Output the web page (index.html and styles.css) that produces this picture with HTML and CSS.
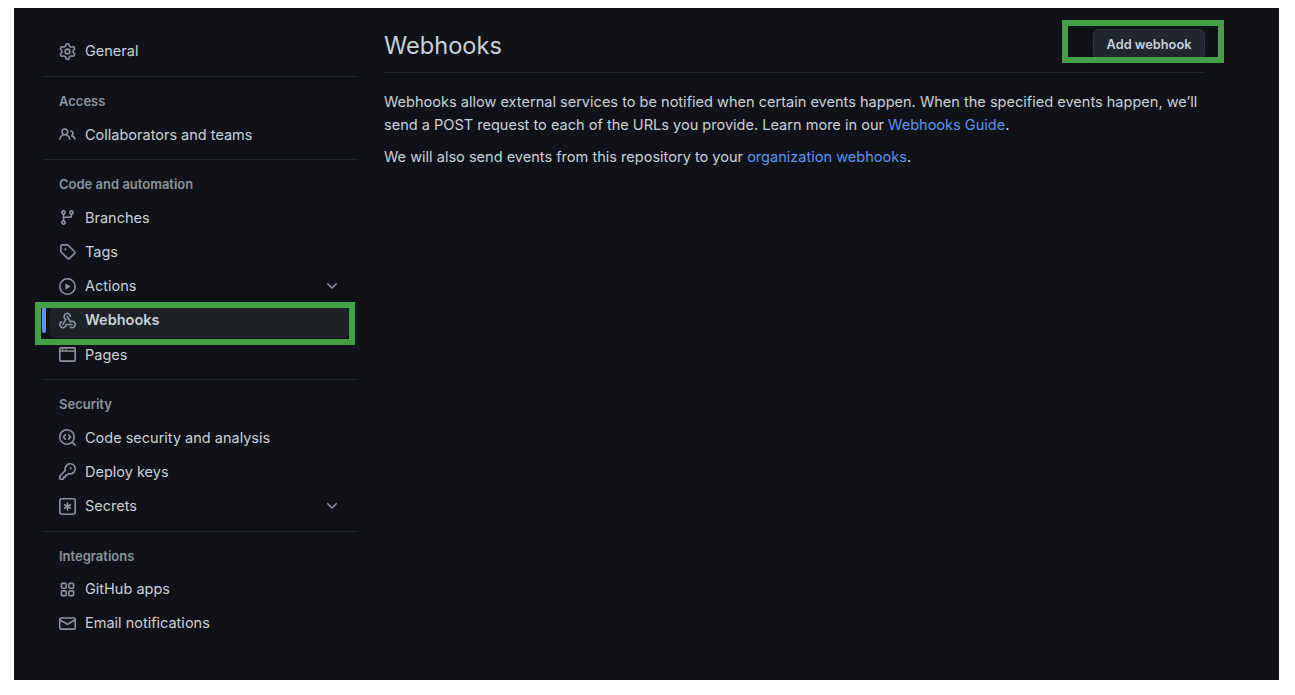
FILE: index.html
```html
<!DOCTYPE html>
<html lang="en">
<head>
<meta charset="utf-8">
<title>Webhooks</title>
<link rel="stylesheet" href="styles.css">
</head>
<body>
<div class="panel">
  <nav class="sidebar">
    <a class="item"><svg class="icon" viewBox="0 0 16 16"><path d="M8 0a8.2 8.2 0 0 1 .701.031C9.444.095 9.99.645 10.16 1.29l.288 1.107c.018.066.079.158.212.224.231.114.454.243.668.386.123.082.233.09.299.071l1.103-.303c.644-.176 1.392.021 1.82.63.27.385.506.792.704 1.218.315.675.111 1.422-.364 1.891l-.814.806c-.049.048-.098.147-.088.294.016.257.016.515 0 .772-.01.147.038.246.088.294l.814.806c.475.469.679 1.216.364 1.891a7.977 7.977 0 0 1-.704 1.217c-.428.61-1.176.807-1.82.63l-1.102-.302c-.067-.019-.177-.011-.3.071a5.909 5.909 0 0 1-.668.386c-.133.066-.194.158-.211.224l-.29 1.106c-.168.646-.715 1.196-1.458 1.26a8.006 8.006 0 0 1-1.402 0c-.743-.064-1.289-.614-1.458-1.26l-.289-1.106c-.018-.066-.079-.158-.212-.224a5.738 5.738 0 0 1-.668-.386c-.123-.082-.233-.09-.299-.071l-1.103.303c-.644.176-1.392-.021-1.82-.63a8.12 8.12 0 0 1-.704-1.218c-.315-.675-.111-1.422.363-1.891l.815-.806c.05-.048.098-.147.088-.294a6.214 6.214 0 0 1 0-.772c.01-.147-.038-.246-.088-.294l-.815-.806C.635 6.045.431 5.298.746 4.623a7.92 7.92 0 0 1 .704-1.217c.428-.61 1.176-.807 1.82-.63l1.102.302c.067.019.177.011.3-.071.214-.143.437-.272.668-.386.133-.066.194-.158.211-.224l.29-1.106C6.009.645 6.556.095 7.299.03 7.53.01 7.764 0 8 0Zm-.571 1.525c-.036.003-.108.036-.137.146l-.289 1.105c-.147.561-.549.967-.998 1.189-.173.086-.34.183-.5.29-.417.278-.97.423-1.529.27l-1.103-.303c-.109-.03-.175.016-.195.045-.22.312-.412.644-.573.99-.014.031-.021.11.059.19l.815.806c.411.406.562.957.53 1.456a4.709 4.709 0 0 0 0 .582c.032.499-.119 1.05-.53 1.456l-.815.806c-.081.08-.073.159-.059.19.162.346.353.677.573.989.02.03.085.076.195.046l1.102-.303c.56-.153 1.113-.008 1.53.27.161.107.328.204.501.29.447.222.85.629.997 1.189l.289 1.105c.029.109.101.143.137.146a6.6 6.6 0 0 0 1.142 0c.036-.003.108-.036.137-.146l.289-1.105c.147-.561.549-.967.998-1.189.173-.086.34-.183.5-.29.417-.278.97-.423 1.529-.27l1.103.303c.109.029.175-.016.195-.045.22-.313.411-.644.573-.99.014-.031.021-.11-.059-.19l-.815-.806c-.411-.406-.562-.957-.53-1.456a4.709 4.709 0 0 0 0-.582c-.032-.499.119-1.05.53-1.456l.815-.806c.081-.08.073-.159.059-.19a6.464 6.464 0 0 0-.573-.989c-.02-.03-.085-.076-.195-.046l-1.102.303c-.56.153-1.113.008-1.53-.27a4.44 4.44 0 0 0-.501-.29c-.447-.222-.85-.629-.997-1.189l-.289-1.105c-.029-.11-.101-.143-.137-.146a6.6 6.6 0 0 0-1.142 0ZM11 8a3 3 0 1 1-6 0 3 3 0 0 1 6 0ZM9.5 8a1.5 1.5 0 1 0-3.001.001A1.5 1.5 0 0 0 9.5 8Z"/></svg><span>General</span></a>
    <hr class="divider">
    <div class="label">Access</div>
    <a class="item"><svg class="icon" viewBox="0 0 16 16"><path d="M2 5.5a3.5 3.5 0 1 1 5.898 2.549 5.508 5.508 0 0 1 3.034 4.084.75.75 0 1 1-1.482.235 4 4 0 0 0-7.9 0 .75.75 0 0 1-1.482-.236A5.507 5.507 0 0 1 3.102 8.05 3.493 3.493 0 0 1 2 5.5ZM11 4a3.001 3.001 0 0 1 2.22 5.018 5.01 5.01 0 0 1 2.56 3.012.749.749 0 0 1-.885.954.752.752 0 0 1-.549-.514 3.507 3.507 0 0 0-2.522-2.372.75.75 0 0 1-.574-.73v-.352a.75.75 0 0 1 .416-.672A1.5 1.5 0 0 0 11 5.5.75.75 0 0 1 11 4Zm-5.5-.5a2 2 0 1 0-.001 3.999A2 2 0 0 0 5.5 3.5Z"/></svg><span>Collaborators and teams</span></a>
    <hr class="divider">
    <div class="label">Code and automation</div>
    <a class="item"><svg class="icon" viewBox="0 0 16 16"><path d="M9.5 3.25a2.25 2.25 0 1 1 3 2.122V6A2.5 2.5 0 0 1 10 8.5H6a1 1 0 0 0-1 1v1.128a2.251 2.251 0 1 1-1.5 0V5.372a2.25 2.25 0 1 1 1.5 0v1.836A2.493 2.493 0 0 1 6 7h4a1 1 0 0 0 1-1v-.628A2.25 2.25 0 0 1 9.5 3.25Zm-6 0a.75.75 0 1 0 1.5 0 .75.75 0 0 0-1.5 0Zm8.25-.75a.75.75 0 1 0 0 1.5.75.75 0 0 0 0-1.5ZM4.25 12a.75.75 0 1 0 0 1.5.75.75 0 0 0 0-1.5Z"/></svg><span>Branches</span></a>
    <a class="item"><svg class="icon" viewBox="0 0 16 16"><path d="M1 7.775V2.75C1 1.784 1.784 1 2.75 1h5.025c.464 0 .91.184 1.238.513l6.25 6.25a1.75 1.75 0 0 1 0 2.474l-5.026 5.026a1.75 1.75 0 0 1-2.474 0l-6.25-6.25A1.752 1.752 0 0 1 1 7.775Zm1.5 0c0 .066.026.13.073.177l6.25 6.25a.25.25 0 0 0 .354 0l5.025-5.025a.25.25 0 0 0 0-.354l-6.25-6.25a.25.25 0 0 0-.177-.073H2.75a.25.25 0 0 0-.25.25ZM6 5a1 1 0 1 1 0 2 1 1 0 0 1 0-2Z"/></svg><span>Tags</span></a>
    <a class="item"><svg class="icon" viewBox="0 0 16 16"><path d="M8 0a8 8 0 1 1 0 16A8 8 0 0 1 8 0ZM1.5 8a6.5 6.5 0 1 0 13 0 6.5 6.5 0 0 0-13 0Zm4.879-2.773 4.264 2.559a.25.25 0 0 1 0 .428l-4.264 2.559A.25.25 0 0 1 6 10.559V5.442a.25.25 0 0 1 .379-.215Z"/></svg><span>Actions</span><svg class="chevron" viewBox="0 0 16 16"><path d="M12.78 5.22a.749.749 0 0 1 0 1.06l-4.25 4.25a.749.749 0 0 1-1.06 0L3.22 6.28a.749.749 0 1 1 1.06-1.06L8 8.939l3.72-3.719a.749.749 0 0 1 1.06 0Z"/></svg></a>
    <a class="item active"><svg class="icon" viewBox="0 0 16 16"><path d="M5.5 4.25a2.25 2.25 0 0 1 4.5 0 .75.75 0 0 0 1.5 0 3.75 3.75 0 1 0-6.14 2.889l-2.272 4.258a.75.75 0 0 0 1.324.706L7 7.25a.75.75 0 0 0-.309-1.015A2.25 2.25 0 0 1 5.5 4.25Z"/><path d="M7.364 3.607a.75.75 0 0 1 1.03.257l2.608 4.349a3.75 3.75 0 1 1-.628 6.785.75.75 0 0 1 .752-1.299 2.25 2.25 0 1 0-.033-3.88.75.75 0 0 1-1.03-.256L7.107 4.636a.75.75 0 0 1 .257-1.03Z"/><path d="M2.9 8.776A.75.75 0 0 1 2.625 9.8 2.25 2.25 0 1 0 6 11.75a.75.75 0 0 1 .75-.751h5.5a.75.75 0 0 1 0 1.5H7.425a3.751 3.751 0 1 1-5.55-3.998.75.75 0 0 1 1.024.274Z"/></svg><span>Webhooks</span><i class="annot annot-row"></i></a>
    <a class="item"><svg class="icon" viewBox="0 0 16 16"><path d="M0 2.75C0 1.784.784 1 1.75 1h12.5c.966 0 1.75.784 1.75 1.75v10.5A1.75 1.75 0 0 1 14.25 15H1.75A1.75 1.75 0 0 1 0 13.25Zm14.5 2.75h-13v7.75c0 .138.112.25.25.25h12.5a.25.25 0 0 0 .25-.25ZM14.25 2.5H1.75a.25.25 0 0 0-.25.25V4h13V2.75a.25.25 0 0 0-.25-.25Z"/><path d="M3 2.2h1V4H3ZM6 2.2h1V4H6Z"/></svg><span>Pages</span></a>
    <hr class="divider">
    <div class="label">Security</div>
    <a class="item"><svg class="icon" viewBox="0 0 16 16"><path d="M8.47 4.97a.75.75 0 0 0 0 1.06L9.94 7.5 8.47 8.97a.75.75 0 1 0 1.06 1.06l2-2a.75.75 0 0 0 0-1.06l-2-2a.75.75 0 0 0-1.06 0ZM6.53 6.03a.75.75 0 0 0-1.06-1.06l-2 2a.75.75 0 0 0 0 1.06l2 2a.75.75 0 1 0 1.06-1.06L5.06 7.5l1.47-1.47Z"/><path d="M12.246 13.307a7.501 7.501 0 1 1 1.06-1.06l2.474 2.473a.749.749 0 0 1-.326 1.275.749.749 0 0 1-.734-.215ZM1.5 7.5a6.002 6.002 0 0 0 3.608 5.504 6.002 6.002 0 0 0 6.486-1.117.748.748 0 0 1 .292-.293A6 6 0 1 0 1.5 7.5Z"/></svg><span>Code security and analysis</span></a>
    <a class="item"><svg class="icon" viewBox="0 0 16 16"><path d="M10.5 0a5.499 5.499 0 1 1-1.288 10.848l-.932.932a.749.749 0 0 1-.53.22H7v.75a.749.749 0 0 1-.22.53l-.5.5a.749.749 0 0 1-.53.22H5v.75a.749.749 0 0 1-.22.53l-.5.5a.749.749 0 0 1-.53.22h-2A1.75 1.75 0 0 1 0 14.25v-2c0-.199.079-.389.22-.53l4.932-4.932A5.5 5.5 0 0 1 10.5 0Zm-4 5.5c-.001.431.069.86.205 1.269a.75.75 0 0 1-.181.768L1.5 12.56v1.69c0 .138.112.25.25.25h1.69l.06-.06v-1.19a.75.75 0 0 1 .75-.75h1.19l.06-.06v-1.19a.75.75 0 0 1 .75-.75h1.19l1.023-1.025a.75.75 0 0 1 .768-.18A4 4 0 1 0 6.5 5.5ZM11 6a1 1 0 1 1 0-2 1 1 0 0 1 0 2Z"/></svg><span>Deploy keys</span></a>
    <a class="item"><svg class="icon" viewBox="0 0 16 16"><path d="M0 2.75A2.75 2.75 0 0 1 2.75 0h10.5A2.75 2.75 0 0 1 16 2.75v10.5A2.75 2.75 0 0 1 13.25 16H2.75A2.75 2.75 0 0 1 0 13.25ZM2.75 1.5c-.69 0-1.25.56-1.25 1.25v10.5c0 .69.56 1.25 1.25 1.25h10.5c.69 0 1.25-.56 1.25-1.25V2.75c0-.69-.56-1.25-1.25-1.25Z"/><path d="M8 4a.75.75 0 0 1 .75.75V6.7l1.69-.975a.75.75 0 0 1 .75 1.3L9.5 8l1.69.976a.75.75 0 0 1-.75 1.298L8.75 9.3v1.951a.75.75 0 0 1-1.5 0V9.299l-1.69.976a.75.75 0 0 1-.75-1.3L6.5 8l-1.69-.975a.75.75 0 0 1 .75-1.3l1.69.976V4.75A.75.75 0 0 1 8 4Z"/></svg><span>Secrets</span><svg class="chevron" viewBox="0 0 16 16"><path d="M12.78 5.22a.749.749 0 0 1 0 1.06l-4.25 4.25a.749.749 0 0 1-1.06 0L3.22 6.28a.749.749 0 1 1 1.06-1.06L8 8.939l3.72-3.719a.749.749 0 0 1 1.06 0Z"/></svg></a>
    <hr class="divider">
    <div class="label">Integrations</div>
    <a class="item"><svg class="icon" viewBox="0 0 16 16"><path d="M1.5 3.25c0-.966.784-1.75 1.75-1.75h2.5c.966 0 1.75.784 1.75 1.75v2.5A1.75 1.75 0 0 1 5.75 7.5h-2.5A1.75 1.75 0 0 1 1.5 5.75Zm7 0c0-.966.784-1.75 1.75-1.75h2.5c.966 0 1.75.784 1.75 1.75v2.5a1.75 1.75 0 0 1-1.75 1.75h-2.5A1.75 1.75 0 0 1 8.5 5.75Zm-7 7c0-.966.784-1.75 1.75-1.75h2.5c.966 0 1.75.784 1.75 1.75v2.5a1.75 1.75 0 0 1-1.75 1.75h-2.5a1.75 1.75 0 0 1-1.75-1.75Zm7 0c0-.966.784-1.75 1.75-1.75h2.5c.966 0 1.75.784 1.75 1.75v2.5a1.75 1.75 0 0 1-1.75 1.75h-2.5a1.75 1.75 0 0 1-1.75-1.75ZM3.25 3a.25.25 0 0 0-.25.25v2.5c0 .138.112.25.25.25h2.5A.25.25 0 0 0 6 5.75v-2.5A.25.25 0 0 0 5.75 3Zm7 0a.25.25 0 0 0-.25.25v2.5c0 .138.112.25.25.25h2.5a.25.25 0 0 0 .25-.25v-2.5a.25.25 0 0 0-.25-.25Zm-7 7a.25.25 0 0 0-.25.25v2.5c0 .138.112.25.25.25h2.5a.25.25 0 0 0 .25-.25v-2.5a.25.25 0 0 0-.25-.25Zm7 0a.25.25 0 0 0-.25.25v2.5c0 .138.112.25.25.25h2.5a.25.25 0 0 0 .25-.25v-2.5a.25.25 0 0 0-.25-.25Z"/></svg><span>GitHub apps</span></a>
    <a class="item"><svg class="icon" viewBox="0 0 16 16"><path d="M1.75 2h12.5c.966 0 1.75.784 1.75 1.75v8.5A1.75 1.75 0 0 1 14.25 14H1.75A1.75 1.75 0 0 1 0 12.25v-8.5C0 2.784.784 2 1.75 2ZM1.5 12.251c0 .138.112.25.25.25h12.5a.25.25 0 0 0 .25-.25V5.809L8.38 9.397a.75.75 0 0 1-.76 0L1.5 5.809v6.442Zm13-8.181v-.32a.25.25 0 0 0-.25-.25H1.75a.25.25 0 0 0-.25.25v.32L8 7.88Z"/></svg><span>Email notifications</span></a>
  </nav>
  <main class="content">
    <header class="head">
      <h1 class="title">Webhooks</h1>
      <div class="action">
        <a class="btn">Add webhook</a>
        <i class="annot annot-btn"></i>
      </div>
    </header>
    <p class="para para-first">Webhooks allow external services to be notified when certain events happen. When the specified events happen, we’ll send a POST request to each of the URLs you provide. Learn more in our <a class="link">Webhooks Guide</a>.</p>
    <p class="para">We will also send events from this repository to your <a class="link">organization webhooks</a>.</p>
  </main>
</div>
</body>
</html>
```
FILE: styles.css
```css
* { box-sizing: border-box; }
html, body { height: 100%; }
body {
  margin: 0;
  padding: 8px 16px 15px 14px;
  background: #fff;
  font-family: Inter, "Liberation Sans", sans-serif;
  font-size: 14.55px;
  color: #c9d1d9;
  overflow: hidden;
}
.panel {
  height: 672px;
  background: #101217;
  display: grid;
  grid-template-columns: 315px 821px;
  column-gap: 26px;
  padding-left: 29px;
}
.sidebar { padding-top: 26.3px; font-size: 14.5px; display: flex; flex-direction: column; }
.item {
  position: relative;
  height: 34.2px;
  flex: none;
  display: flex;
  align-items: center;
  padding-left: 16px;
  padding-right: 18px;
  gap: 9px;
  line-height: 20px;
}
.icon { width: 17px; height: 17px; fill: #8b949e; flex: none; }
.chevron { width: 16px; height: 16px; fill: #8b949e; flex: none; margin-left: auto; }
.item.active { font-weight: 600; }
.item.active::before {
  content: "";
  position: absolute;
  left: -1px;
  top: 4px;
  width: 4px;
  height: 26px;
  border-radius: 2px;
  background: #5d94f0;
}
.item.active::after {
  content: "";
  position: absolute;
  z-index: 0;
  left: 7px;
  right: 8px;
  top: 4px;
  bottom: -1px;
  border-radius: 6px;
  background: #1e2227;
}
.item.active > svg, .item.active > span { position: relative; z-index: 1; }
.divider {
  width: 100%;
  height: 1px;
  flex: none;
  margin: 7.5px 0 8px;
  border: 0;
  background: #21262d;
}
.label {
  height: 32.5px;
  flex: none;
  padding-left: 16px;
  display: flex;
  align-items: center;
  font-size: 13px;
  font-weight: 600;
  color: #8b949e;
}
.annot {
  position: absolute;
  z-index: 2;
  border: 6px solid #43a047;
  pointer-events: none;
}
.annot-row { left: -8px; right: 3px; top: -1px; bottom: -8px; }
.annot-btn { left: -31px; right: -19px; top: -9px; bottom: -4px; }
.content { padding-top: 18px; }
.head {
  height: 47px;
  display: flex;
  justify-content: space-between;
  align-items: flex-start;
  border-bottom: 1px solid #21262d;
}
.title { margin: 0; font-size: 23.6px; font-weight: 400; line-height: 40px; color: #c9d1d9; }
.action { position: relative; margin-top: 3px; }
.btn {
  display: flex;
  align-items: center;
  justify-content: center;
  width: 112px;
  height: 30px;
  border: 1px solid #30363d;
  border-radius: 6px;
  background: #21262d;
  font-size: 12.75px;
  font-weight: 600;
  color: #c9d1d9;
}
.para { margin: 0 0 10px; line-height: 22.5px; }
.para-first { margin-top: 18px; }
.link { color: #5d94f0; }
```
